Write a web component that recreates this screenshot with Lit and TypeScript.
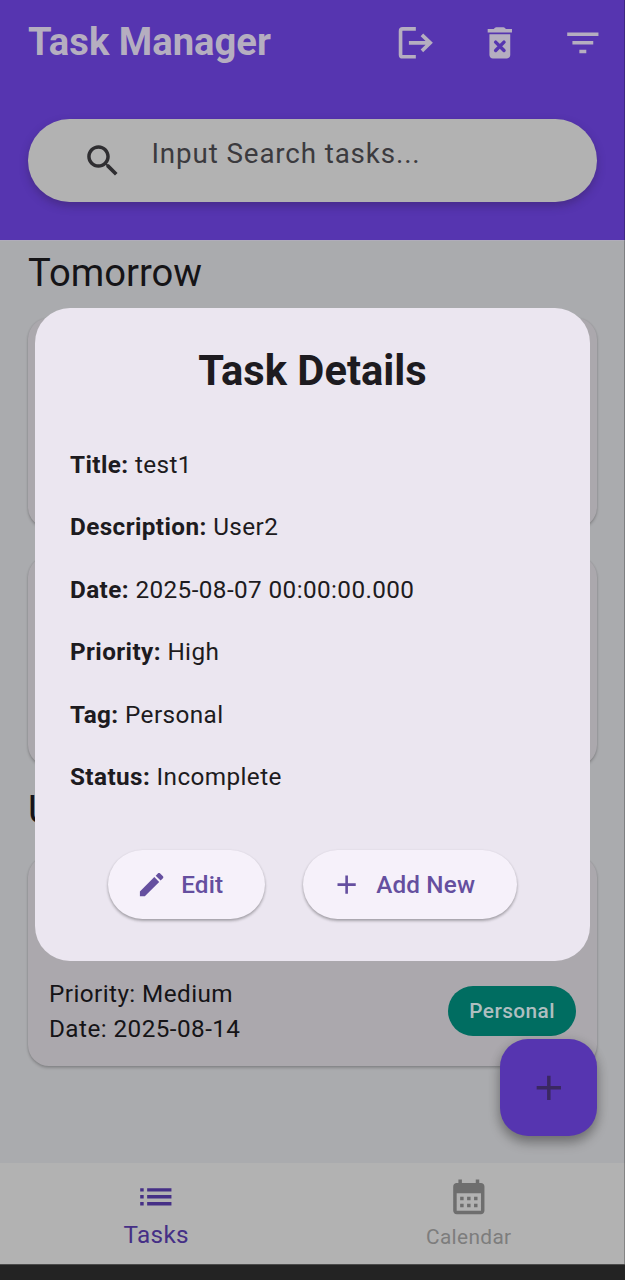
import { LitElement, html, css, svg } from "lit";
import { customElement, property } from "lit/decorators.js";

const icons = {
  logout: svg`<path fill="none" stroke="currentColor" stroke-width="2.100" d="M12 4H4.400Q3.200 4 3.200 5.200V18.800Q3.200 20 4.400 20H12"/><path fill="none" stroke="currentColor" stroke-width="2.100" d="M8 12H20.600M15.500 7.400L20.300 12L15.500 16.600"/>`,
  trash: svg`<path fill="currentColor" d="M6 19c0 1.1.9 2 2 2h8c1.1 0 2-.9 2-2V7H6zM15.5 4l-.7-.7c-.2-.2-.4-.3-.7-.3H9.900c-.3 0-.5.1-.7.3L8.500 4H5v2h14V4z"/><path fill="none" stroke="#5635b0" stroke-width="2" stroke-linecap="round" d="M9.600 11.600l4.800 4.800M14.400 11.600l-4.800 4.800"/>`,
  filter: svg`<path fill="currentColor" d="M10 18h4v-2h-4v2zM3 6v2h18V6H3zm3 7h12v-2H6v2z"/>`,
  search: svg`<path fill="currentColor" d="M15.5 14h-.79l-.28-.27C15.41 12.590 16 11.110 16 9.500 16 5.910 13.090 3 9.500 3S3 5.910 3 9.500 5.910 16 9.500 16c1.610 0 3.090-.59 4.230-1.570l.27.28v.79l5 4.990L20.490 19l-4.990-5zm-6 0C7.010 14 5 11.990 5 9.500S7.010 5 9.500 5 14 7.010 14 9.500 11.990 14 9.500 14z"/>`,
  edit: svg`<path fill="currentColor" d="M3 17.250V21h3.750L17.810 9.940l-3.750-3.750L3 17.250zM20.710 7.040c.39-.39.39-1.020 0-1.410l-2.340-2.340c-.39-.39-1.020-.39-1.410 0l-1.830 1.830 3.750 3.750 1.830-1.830z"/>`,
  add: svg`<path fill="currentColor" d="M19 13h-6v6h-2v-6H5v-2h6V5h2v6h6v2z"/>`,
  list: svg`<path fill="currentColor" d="M3 13h2v-2H3v2zm0 4h2v-2H3v2zm0-8h2V7H3v2zm4 4h14v-2H7v2zm0 4h14v-2H7v2zM7 7v2h14V7H7z"/>`,
  calendar: svg`<path fill="currentColor" fill-rule="evenodd" d="M19 4h-1V2h-2v2H8V2H6v2H5C3.890 4 3 4.900 3 6v14c0 1.100.89 2 2 2h14c1.100 0 2-.9 2-2V6C21 4.900 20.100 4 19 4zM19 20H5V10h14V20zM9 14H7v-2h2V14zM13 14h-2v-2h2V14zM17 14h-2v-2h2V14zM9 18H7v-2h2V18zM13 18h-2v-2h2V18zM17 18h-2v-2h2V18z"/>`,
};

@customElement("md-icon")
class MdIcon extends LitElement {
  @property() name: keyof typeof icons = "add";
  static styles = css`
    :host { display: block; width: 41.67px; height: 41.67px; flex: none; }
    svg { display: block; width: 100%; height: 100%; }
  `;
  render() {
    return html`<svg viewBox="0 0 24 24" aria-hidden="true">${icons[this.name]}</svg>`;
  }
}

@customElement("app-root")
class AppRoot extends LitElement {
  static styles = css`
    :host {
      display: block;
      font-family: Roboto, sans-serif;
      color: #151417;
    }
    * { box-sizing: border-box; }
    .screen {
      position: relative;
      width: 625px;
      height: 1280px;
      display: flex;
      flex-direction: column;
      overflow: hidden;
      background: #aaabae;
    }
    .header { height: 240px; flex: none; background: #5635b0; color: #b5aec0; }
    .bar { height: 84px; display: flex; align-items: center; padding: 0 0.6px 0 28px; }
    .app-title { flex: 1; margin: 0; font-size: 38.2px; line-height: 48px; font-weight: 700; white-space: nowrap; }
    .action { width: 83.33px; display: flex; justify-content: center; padding-top: 1px; }
    .search {
      margin: 35px 28px 0;
      height: 83px;
      border-radius: 42px;
      background: #b2b2b2;
      color: #3b3a3e;
      display: flex;
      align-items: center;
      padding-left: 53.8px;
      box-shadow: 0 4px 8px rgba(50, 30, 80, 0.4);
    }
    .search md-icon { color: #2f2e31; }
    .placeholder { margin: 0 0 14px 28px; font-size: 27.780px; line-height: 40px; letter-spacing: 0.87px; }
    .content { flex: 1; min-height: 0; padding: 0 28px; border-top: 1px solid #b0acbb; }
    .heading { margin: 0; padding-top: 8px; font-size: 38.200px; line-height: 48px; font-weight: 400; }
    .card {
      height: 210px;
      margin-bottom: 28px;
      border-radius: 21px;
      background: #aba8ad;
      box-shadow: 0 2px 3px rgba(0, 0, 0, 0.2), 0 0 2px rgba(0, 0, 0, 0.12);
    }
    .card.first { margin-top: 21px; }
    .card.last { margin-top: 22px; height: 210px; display: flex; align-items: flex-end; justify-content: space-between; padding: 0 21px 19.500px; }
    .heading.next { padding-top: 0; margin-top: -8px; }
    .meta { font-size: 24.300px; line-height: 34.700px; letter-spacing: 0.43px; }
    .chip {
      height: 50px;
      margin-bottom: 10.500px;
      padding: 0 21px;
      border-radius: 25px;
      background: #006d61;
      color: #aebfc0;
      font-size: 20.830px;
      font-weight: 500;
      line-height: 51px;
      letter-spacing: 0.43px;
    }
    .nav { height: 101px; flex: none; display: flex; background: #b2b2b2; }
    .tab { flex: 1; display: flex; flex-direction: column; align-items: center; color: #6e6e6e; padding-top: 13px; }
    .tab .label { font-size: 20.830px; line-height: 24px; margin-top: 7px; letter-spacing: 0.35px; color: #7d7d7d; }
    .tab.active, .tab.active .label { color: #452f86; }
    .tab.active .label { font-size: 24.300px; line-height: 28px; margin-top: 3px; }
    .system { height: 16px; flex: none; background: #232323; border-top: 1px solid #4b4b4b; }
    .fab {
      position: absolute;
      left: 500px;
      top: 1039px;
      width: 97px;
      height: 97px;
      border: 0;
      padding: 0;
      border-radius: 28px;
      background: #5635b0;
      color: #3a2861;
      display: grid;
      place-items: center;
      box-shadow: 0 7px 12px rgba(0, 0, 0, 0.28), 0 2px 12px rgba(0, 0, 0, 0.14);
    }
    .dialog {
      position: absolute;
      left: 35px;
      top: 308px;
      width: 555px;
      height: 653px;
      padding: 35px;
      border-radius: 35px;
      background: #ebe6f0;
      color: #1d1b20;
    }
    .dialog-title { margin: 3px 0 51.5px; text-align: center; font-size: 41.670px; line-height: 50px; font-weight: 700; }
    .row { margin: 0 0 27.800px; font-size: 24.300px; line-height: 34.700px; letter-spacing: 0.4px; white-space: nowrap; }
    .row b { font-weight: 700; }
    .buttons { display: flex; justify-content: space-evenly; padding-top: 27.5px; }
    .button {
      height: 69.400px;
      border: 0;
      border-radius: 35px;
      background: #f6f1fa;
      color: #654f9f;
      font: 500 24.300px/28px Roboto, sans-serif;
      letter-spacing: 0.17px;
      display: flex;
      align-items: center;
      gap: 14px;
      padding: 0 41.670px 0 27.780px;
      white-space: nowrap;
      box-shadow: 0 2px 3px rgba(0, 0, 0, 0.24), 0 1px 3px rgba(0, 0, 0, 0.12);
    }
    .button md-icon { width: 31.250px; height: 31.250px; }
    .edge { position: absolute; right: 0; top: 0; width: 1px; height: 1264px; background: rgba(0, 0, 0, 0.25); }
  `;

  private details = [
    ["Title", "test1"],
    ["Description", "User2"],
    ["Date", "2025-08-07 00:00:00.000"],
    ["Priority", "High"],
    ["Tag", "Personal"],
    ["Status", "Incomplete"],
  ];

  render() {
    return html`
      <div class="screen">
        <header class="header">
          <div class="bar">
            <h1 class="app-title">Task Manager</h1>
            ${["logout", "trash", "filter"].map((n) => html`<div class="action"><md-icon name=${n}></md-icon></div>`)}
          </div>
          <div class="search">
            <md-icon name="search"></md-icon>
            <span class="placeholder">Input Search tasks...</span>
          </div>
        </header>
        <main class="content">
          <h2 class="heading">Tomorrow</h2>
          <div class="card first"></div>
          <div class="card"></div>
          <h2 class="heading next">U</h2>
          <div class="card last">
            <div class="meta">
              <div>Priority: Medium</div>
              <div>Date: 2025-08-14</div>
            </div>
            <span class="chip">Personal</span>
          </div>
        </main>
        <nav class="nav">
          <div class="tab active"><md-icon name="list"></md-icon><span class="label">Tasks</span></div>
          <div class="tab"><md-icon name="calendar"></md-icon><span class="label">Calendar</span></div>
        </nav>
        <div class="system"></div>
        <button class="fab" aria-label="Add"><md-icon name="add"></md-icon></button>
        <div class="edge"></div>
        <section class="dialog" role="dialog">
          <h2 class="dialog-title">Task Details</h2>
          ${this.details.map(([k, v]) => html`<p class="row"><b>${k}:</b> ${v}</p>`)}
          <div class="buttons">
            <button class="button"><md-icon name="edit"></md-icon>Edit</button>
            <button class="button"><md-icon name="add"></md-icon>Add New</button>
          </div>
        </section>
      </div>
    `;
  }
}
